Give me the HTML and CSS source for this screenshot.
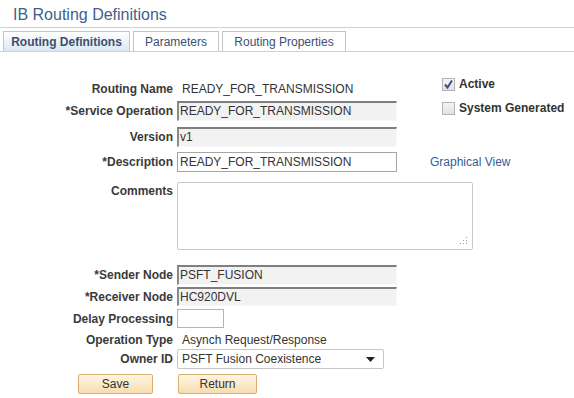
FILE: index.html
```html
<!DOCTYPE html>
<html lang="en">
<head>
    <meta charset="UTF-8">
    <title>IB Routing Definitions</title>
    <link rel="stylesheet" href="styles.css">
</head>
<body>
    <div class="page-title">IB Routing Definitions</div>

    <div class="tabs">
        <div class="tab active t1">Routing Definitions</div>
        <div class="tab t2">Parameters</div>
        <div class="tab t3">Routing Properties</div>
    </div>

    <div class="form">
        <div class="top">
            <div class="top-left">
                <div class="row r-name">
                    <label class="lbl">Routing Name</label>
                    <span class="value">READY_FOR_TRANSMISSION</span>
                </div>
                <div class="row r-svc">
                    <label class="lbl">*Service Operation</label>
                    <div class="field ro wide">READY_FOR_TRANSMISSION</div>
                </div>
            </div>
            <div class="checks">
                <div class="check-row">
                    <span class="cbox">
                        <svg width="11" height="11" viewBox="0 0 11 11"><path d="M2 5.5 L4.5 8.5 L9 1.5" fill="none" stroke="#3b4f8f" stroke-width="2"/></svg>
                    </span>
                    <span class="check-lbl">Active</span>
                </div>
                <div class="check-row">
                    <span class="cbox"></span>
                    <span class="check-lbl">System Generated</span>
                </div>
            </div>
        </div>

        <div class="row r-ver">
            <label class="lbl">Version</label>
            <div class="field ro wide">v1</div>
        </div>

        <div class="row r-desc">
            <label class="lbl">*Description</label>
            <div class="field edit wide">READY_FOR_TRANSMISSION</div>
            <a class="link" href="#">Graphical View</a>
        </div>

        <div class="row r-comm">
            <label class="lbl">Comments</label>
            <div class="comments">
                <svg class="grip" width="8" height="8" viewBox="0 0 8 8">
                    <rect x="6" y="0" width="1" height="1" fill="#999"/>
                    <rect x="6" y="3" width="1" height="1" fill="#999"/>
                    <rect x="3" y="3" width="1" height="1" fill="#999"/>
                    <rect x="6" y="6" width="1" height="1" fill="#999"/>
                    <rect x="3" y="6" width="1" height="1" fill="#999"/>
                    <rect x="0" y="6" width="1" height="1" fill="#999"/>
                </svg>
            </div>
        </div>

        <div class="row r-send">
            <label class="lbl">*Sender Node</label>
            <div class="field ro wide">PSFT_FUSION</div>
        </div>

        <div class="row r-recv">
            <label class="lbl">*Receiver Node</label>
            <div class="field ro wide">HC920DVL</div>
        </div>

        <div class="row r-delay">
            <label class="lbl">Delay Processing</label>
            <div class="field small"></div>
        </div>

        <div class="row r-op">
            <label class="lbl">Operation Type</label>
            <span class="value">Asynch Request/Response</span>
        </div>

        <div class="row r-owner">
            <label class="lbl">Owner ID</label>
            <div class="select">
                <span>PSFT Fusion Coexistence</span>
                <svg width="9" height="5" viewBox="0 0 9 5"><path d="M0 0 H9 L4.5 5 Z" fill="#222"/></svg>
            </div>
        </div>

        <div class="buttons">
            <button class="btn save">Save</button>
            <button class="btn ret">Return</button>
        </div>
    </div>
</body>
</html>
```

FILE: styles.css
```css
body {
    margin: 0;
    font-family: "Liberation Sans", Arial, sans-serif;
    font-size: 12px;
    color: #333;
    background-color: #fff;
}

.page-title {
    height: 23px;
    padding: 4px 0 0 13px;
    line-height: 22px;
    font-size: 16px;
    color: #3f5f8c;
    border-bottom: 1px solid #c9d2dc;
}

.tabs {
    display: flex;
    gap: 3px;
    margin-top: 3px;
    padding-left: 3px;
    border-bottom: 1px solid #d0d0d0;
}

.tab {
    box-sizing: border-box;
    height: 20px;
    line-height: 20px;
    text-align: center;
    white-space: nowrap;
    border: 1px solid #c4c4c4;
    border-bottom: none;
    color: #3c4f6e;
    background: #fff;
}

.tab.active {
    font-weight: bold;
    border-color: #bcc7d4;
    background: linear-gradient(#ffffff, #dbe7f4);
}

.t1 { width: 127px; }
.t2 { width: 86px; }
.t3 { width: 124px; }

.form {
    padding-top: 28px;
}

.top {
    display: flex;
}

.top-left {
    width: 442px;
}

.checks {
    margin-top: -3px;
}

.check-row {
    display: flex;
    align-items: center;
    height: 14px;
    margin-bottom: 10px;
}

.check-row:last-child {
    margin-bottom: 0;
}

.cbox {
    display: flex;
    align-items: center;
    justify-content: center;
    width: 11px;
    height: 11px;
    border: 1px solid #b3b3b3;
    background: linear-gradient(#f4f4f4, #e2e2e2);
    margin-right: 4px;
}

.check-lbl {
    font-weight: bold;
    color: #333;
}

.row {
    display: flex;
    align-items: center;
}

.lbl {
    width: 177px;
    padding-right: 4px;
    box-sizing: border-box;
    text-align: right;
    font-weight: bold;
    color: #3a3a3a;
    flex-shrink: 0;
}

.value {
    padding-left: 5px;
}

.field {
    box-sizing: border-box;
    padding-left: 2px;
    white-space: nowrap;
}

.field.wide {
    width: 220px;
}

.field.ro {
    background: #f2f2f2;
    border-top: 2px solid #7f7f7f;
    border-left: 2px solid #8a8a8a;
    border-right: 1px solid #f8f8f8;
    border-bottom: 1px solid #f8f8f8;
    padding-left: 1px;
}

.field.edit {
    border: 1px solid #a5a5a5;
    background: #fff;
}

.field.small {
    width: 47px;
    height: 19px;
    border: 1px solid #b5b5b5;
    background: #fff;
}

.r-name {
    height: 18px;
    line-height: 18px;
}

.r-svc {
    margin-top: 3px;
}

.r-svc .field,
.r-ver .field,
.r-desc .field,
.r-send .field {
    height: 20px;
    line-height: 17px;
}

.r-ver {
    margin-top: 6px;
}

.r-desc {
    margin-top: 5px;
}

.r-desc .field {
    line-height: 18px;
}

.link {
    margin-left: 33px;
    color: #2f5f9e;
    text-decoration: none;
}

.r-comm {
    margin-top: 10px;
    align-items: flex-start;
}

.r-comm .lbl {
    padding-top: 2px;
}

.comments {
    position: relative;
    width: 296px;
    height: 68px;
    box-sizing: border-box;
    border: 1px solid #cacaca;
    border-radius: 2px;
    background: #fff;
}

.grip {
    position: absolute;
    right: 4px;
    bottom: 4px;
}

.r-send {
    margin-top: 15px;
}

.r-recv {
    margin-top: 2px;
}

.r-recv .field {
    height: 19px;
    line-height: 16px;
}

.r-delay {
    margin-top: 3px;
}

.r-op {
    margin-top: 4px;
    height: 16px;
    line-height: 16px;
}

.r-owner {
    margin-top: 1px;
}

.select {
    display: flex;
    align-items: center;
    justify-content: space-between;
    width: 207px;
    height: 20px;
    box-sizing: border-box;
    padding: 0 8px 0 4px;
    border: 1px solid #c6c6c6;
    border-radius: 2px;
    background: #fff;
}

.buttons {
    display: flex;
    margin-top: 5px;
    padding-left: 78px;
    gap: 25px;
}

.btn {
    height: 20px;
    padding: 0;
    border: 1px solid #dcae6e;
    border-radius: 2px;
    background: linear-gradient(#fff6e6, #f8dcae);
    font-family: "Liberation Sans", Arial, sans-serif;
    font-size: 12px;
    color: #333;
}

.btn.save {
    width: 75px;
}

.btn.ret {
    width: 79px;
}
```
